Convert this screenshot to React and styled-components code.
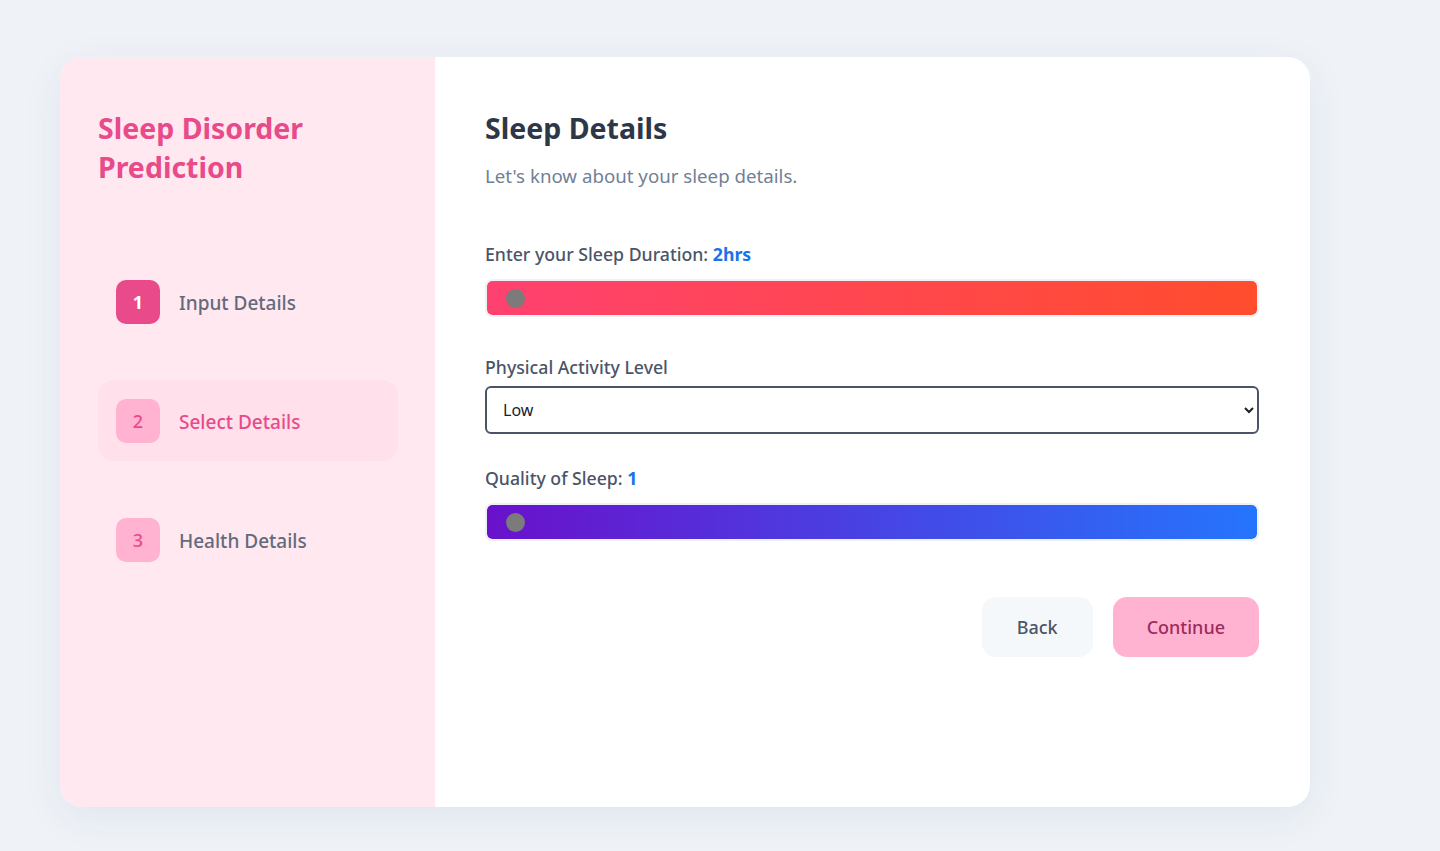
import React, { useState } from 'react';
import styled, { createGlobalStyle } from 'styled-components';

const GlobalStyle = createGlobalStyle`
  body {
    margin: 0;
    background: #eff3f8;
    font-family: 'Noto Sans', 'Open Sans', sans-serif;
  }
`;

const steps = [
  { id: 1, label: 'Input Details', state: 'done' },
  { id: 2, label: 'Select Details', state: 'active' },
  { id: 3, label: 'Health Details', state: 'todo' },
];

const App = () => {
  const [duration, setDuration] = useState(2);
  const [quality, setQuality] = useState(1);
  const [activity, setActivity] = useState('Low');

  return (
    <Page>
      <GlobalStyle />
      <Card>
        <Sidebar>
          <Brand>Sleep Disorder Prediction</Brand>
          <StepList>
            {steps.map((s) => (
              <Step key={s.id} $active={s.state === 'active'}>
                <Badge $state={s.state}>{s.id}</Badge>
                <StepLabel $active={s.state === 'active'}>{s.label}</StepLabel>
              </Step>
            ))}
          </StepList>
        </Sidebar>
        <Main>
          <Heading>Sleep Details</Heading>
          <Sub>Let's know about your sleep details.</Sub>

          <Group $mt={52}>
            <Label $mb={11}>
              Enter your Sleep Duration: <Value>{duration}hrs</Value>
            </Label>
            <Track $from='#ff4170' $to='#ff4d2d'>
              <Range
                type='range'
                min={2}
                max={12}
                value={duration}
                onChange={(e) => setDuration(e.target.value)}
              />
            </Track>
          </Group>

          <Group $mt={37}>
            <Label $mb={5}>Physical Activity Level</Label>
            <Select value={activity} onChange={(e) => setActivity(e.target.value)}>
              <option>Low</option>
              <option>Medium</option>
              <option>High</option>
            </Select>
          </Group>

          <Group $mt={31}>
            <Label $mb={11}>
              Quality of Sleep: <Value>{quality}</Value>
            </Label>
            <Track $from='#6a11cb' $to='#2575fc'>
              <Range
                type='range'
                min={1}
                max={10}
                value={quality}
                onChange={(e) => setQuality(e.target.value)}
              />
            </Track>
          </Group>

          <Actions>
            <Button>Back</Button>
            <Button $primary>Continue</Button>
          </Actions>
        </Main>
      </Card>
    </Page>
  );
};

export default App;

const Page = styled.div`
  min-height: 851px;
  padding: 57px 0 0 60px;
  box-sizing: border-box;
`;

const Card = styled.div`
  width: 1250px;
  height: 750px;
  display: flex;
  border-radius: 22px;
  overflow: hidden;
  background: #fff;
  box-shadow: 0 10px 40px rgba(30, 50, 90, 0.07);
`;

const Sidebar = styled.aside`
  width: 375px;
  flex-shrink: 0;
  background: #ffe8f0;
  padding: 52px 37px 0 38px;
  box-sizing: border-box;
`;

const Brand = styled.h1`
  margin: 0;
  font-size: 28.5px;
  line-height: 39px;
  font-weight: 700;
  color: #e84a8a;
`;

const StepList = styled.div`
  margin-top: 74px;
  display: flex;
  flex-direction: column;
  gap: 38px;
`;

const Step = styled.div`
  display: flex;
  align-items: center;
  gap: 19px;
  height: 81px;
  padding: 0 18px;
  border-radius: 16px;
  background: ${(p) => (p.$active ? '#ffe0eb' : 'transparent')};
`;

const Badge = styled.div`
  width: 44px;
  height: 44px;
  border-radius: 10px;
  display: flex;
  align-items: center;
  justify-content: center;
  font-size: 18px;
  font-weight: ${(p) => (p.$state === 'done' ? 700 : 500)};
  background: ${(p) => (p.$state === 'done' ? '#e84a8a' : '#ffb3d1')};
  color: ${(p) => (p.$state === 'done' ? '#fff' : '#e84a8a')};
`;

const StepLabel = styled.span`
  padding-top: 3px;
  font-size: 19px;
  font-weight: 500;
  color: ${(p) => (p.$active ? '#e84a8a' : '#636a7b')};
`;

const Main = styled.main`
  flex: 1;
  padding: 52px 51px 0 50px;
  box-sizing: border-box;
`;

const Heading = styled.h2`
  margin: 0;
  font-size: 28.5px;
  line-height: 39px;
  font-weight: 700;
  color: #2d3748;
`;

const Sub = styled.p`
  margin: 14px 0 0;
  font-size: 18.7px;
  line-height: 27px;
  color: #718096;
`;

const Group = styled.div`
  margin-top: ${(p) => p.$mt}px;
  display: flex;
  flex-direction: column;
`;

const Label = styled.label`
  margin-bottom: ${(p) => p.$mb}px;
  font-size: 17.7px;
  line-height: 27px;
  font-weight: 500;
  color: #4a5568;
`;

const Value = styled.span`
  color: #1a73e8;
  font-weight: 700;
`;

const Track = styled.div`
  height: 38px;
  box-sizing: border-box;
  border: 2px solid #eef2f7;
  border-radius: 7px;
  background: linear-gradient(90deg, ${(p) => p.$from}, ${(p) => p.$to});
  background-clip: padding-box;
  display: flex;
`;

const Range = styled.input`
  -webkit-appearance: none;
  appearance: none;
  flex: 1;
  height: 100%;
  margin: 0;
  padding: 0 18px 0 19px;
  box-sizing: border-box;
  border: none;
  outline: none;
  background: transparent;

  &::-webkit-slider-thumb {
    -webkit-appearance: none;
    width: 19px;
    height: 19px;
    border-radius: 50%;
    background: #7b7b7b;
    cursor: pointer;
  }
`;

const Select = styled.select`
  width: 100%;
  height: 48px;
  padding: 0 8px 0 12px;
  box-sizing: border-box;
  border: 2px solid #4a5568;
  border-radius: 6px;
  background: #fff;
  font-family: inherit;
  font-size: 16px;
  color: #1a202c;
  outline: none;
`;

const Actions = styled.div`
  margin-top: 56px;
  display: flex;
  justify-content: flex-end;
  gap: 20px;
`;

const Button = styled.button`
  height: 60px;
  padding: 0 ${(p) => (p.$primary ? 34 : 35)}px;
  border: none;
  border-radius: 14px;
  font-family: inherit;
  font-size: 18px;
  font-weight: 500;
  cursor: pointer;
  background: ${(p) => (p.$primary ? '#ffb3d1' : '#f5f8fb')};
  color: ${(p) => (p.$primary ? '#9b2c5c' : '#4a5568')};
`;
